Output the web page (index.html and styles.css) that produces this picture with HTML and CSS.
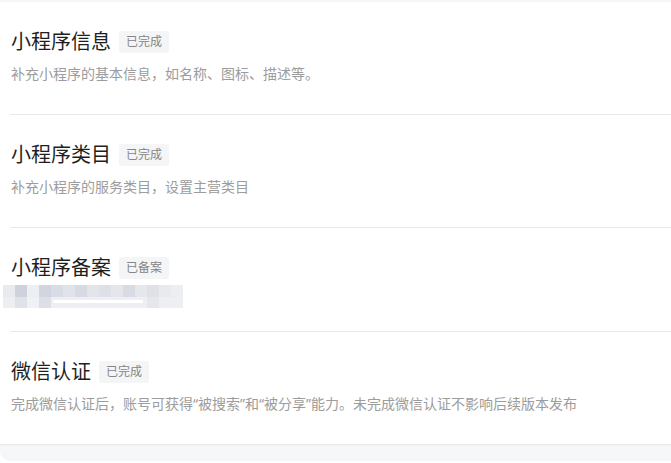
FILE: index.html
```html
<!DOCTYPE html>
<html lang="zh-CN">
<head>
    <meta charset="UTF-8">
    <meta name="viewport" content="width=device-width, initial-scale=1.0">
    <title>小程序设置</title>
    <link rel="stylesheet" href="styles.css">
</head>
<body>

<div class="panel">
    <div class="card">
        <div class="step">
            <div class="step-head">
                <span class="step-title">小程序信息</span>
                <span class="tag">已完成</span>
            </div>
            <p class="step-desc">补充小程序的基本信息，如名称、图标、描述等。</p>
        </div>
        <div class="step">
            <div class="step-head">
                <span class="step-title">小程序类目</span>
                <span class="tag">已完成</span>
            </div>
            <p class="step-desc">补充小程序的服务类目，设置主营类目</p>
        </div>
        <div class="step step-record">
            <div class="step-head">
                <span class="step-title">小程序备案</span>
                <span class="tag">已备案</span>
            </div>
            <!-- 备案号已打码 -->
            <svg class="mosaic" width="180" height="23" viewBox="0 0 180 23">
                <rect x="0" y="0" width="12" height="12" fill="#e8eaef"/>
                <rect x="12" y="0" width="12" height="12" fill="#cfd2dc"/>
                <rect x="24" y="0" width="12" height="12" fill="#eeeff3"/>
                <rect x="36" y="0" width="12" height="12" fill="#d2d5df"/>
                <rect x="48" y="0" width="12" height="12" fill="#d9dce5"/>
                <rect x="60" y="0" width="12" height="12" fill="#e1e3ea"/>
                <rect x="72" y="0" width="12" height="12" fill="#d7dae3"/>
                <rect x="84" y="0" width="12" height="12" fill="#e3e5eb"/>
                <rect x="96" y="0" width="12" height="12" fill="#dee0e8"/>
                <rect x="108" y="0" width="12" height="12" fill="#e5e6ec"/>
                <rect x="120" y="0" width="12" height="12" fill="#d9dbe4"/>
                <rect x="132" y="0" width="12" height="12" fill="#e6e7ed"/>
                <rect x="144" y="0" width="12" height="12" fill="#dfe1e8"/>
                <rect x="156" y="0" width="12" height="12" fill="#e9eaef"/>
                <rect x="168" y="0" width="12" height="12" fill="#eceef2"/>
                <rect x="0" y="12" width="12" height="11" fill="#eceef2"/>
                <rect x="12" y="12" width="12" height="11" fill="#e0e2e9"/>
                <rect x="24" y="12" width="12" height="11" fill="#f0f1f4"/>
                <rect x="36" y="12" width="12" height="11" fill="#dddfe7"/>
                <rect x="48" y="12" width="96" height="11" fill="#eeeff3"/>
                <rect x="144" y="12" width="12" height="11" fill="#e6e7ed"/>
                <rect x="156" y="12" width="24" height="11" fill="#eeeff3"/>
                <rect x="50" y="15" width="90" height="3" fill="#ffffff"/>
            </svg>
        </div>
        <div class="step">
            <div class="step-head">
                <span class="step-title">微信认证</span>
                <span class="tag">已完成</span>
            </div>
            <p class="step-desc">完成微信认证后，账号可获得“被搜索”和“被分享”能力。未完成微信认证不影响后续版本发布</p>
        </div>
    </div>
</div>

</body>
</html>
```

FILE: styles.css
```css
body {
    margin: 0;
    background: #ffffff;
    font-family: "Noto Sans", "Noto Sans CJK SC", sans-serif;
    overflow: hidden;
}
.panel {
    width: 690px;
    padding: 2px 0 17px;
    background: #f6f7f9;
    border-radius: 0 0 10px 10px;
}
.card {
    background: #ffffff;
    padding-left: 10px;
    box-shadow: 0 1px 2px rgba(0, 0, 0, 0.08);
}
.step {
    padding: 26px 0 30px 1px;
}
.step + .step {
    border-top: 1px solid #e8e8e8;
}
.step-record {
    padding-bottom: 23px;
}
.step-head {
    display: flex;
    align-items: center;
    height: 28px;
}
.step-title {
    font-size: 20px;
    line-height: 28px;
    color: #1f1f1f;
}
.tag {
    margin-left: 8px;
    height: 22px;
    line-height: 22px;
    padding: 0 7px;
    font-size: 12px;
    color: #858585;
    background: #f4f5f7;
    border-radius: 3px;
}
.step-desc {
    margin: 8px 0 0;
    font-size: 14px;
    line-height: 20px;
    color: #9c9c9c;
}
.mosaic {
    display: block;
    margin: 3px 0 0 -8px;
}
```
